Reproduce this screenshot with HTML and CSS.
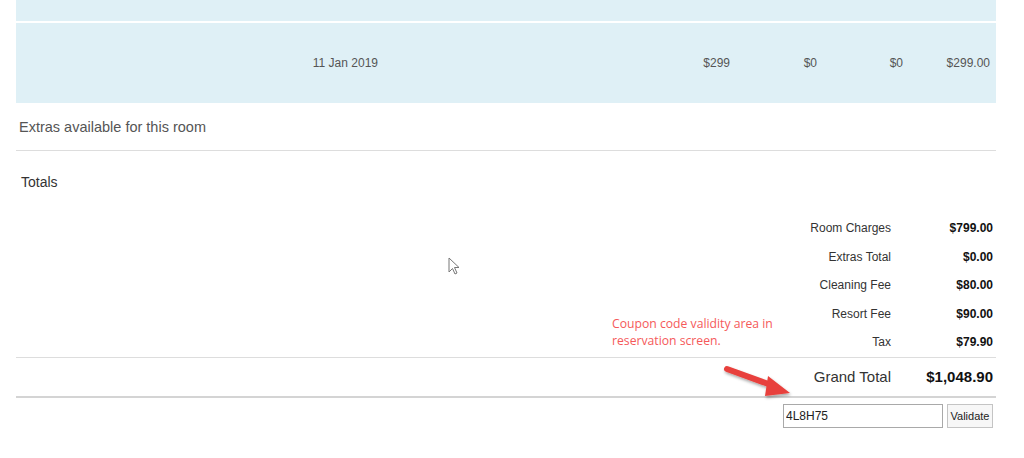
FILE: index.html
```html
<!DOCTYPE html>
<html>
<head>
<meta charset="utf-8">
<link rel="stylesheet" href="styles.css">
</head>
<body>
<div class="page">
  <div class="band band-top"></div>
  <div class="band band-row">
    <span class="cell date">11 Jan 2019</span>
    <span class="cell c1">$299</span>
    <span class="cell c2">$0</span>
    <span class="cell c3">$0</span>
    <span class="cell c4">$299.00</span>
  </div>
  <div class="extras">Extras available for this room</div>
  <div class="totals-title">Totals</div>
  <div class="totals">
    <div class="trow"><span class="tl">Room Charges</span><span class="tv">$799.00</span></div>
    <div class="trow"><span class="tl">Extras Total</span><span class="tv">$0.00</span></div>
    <div class="trow"><span class="tl">Cleaning Fee</span><span class="tv">$80.00</span></div>
    <div class="trow"><span class="tl">Resort Fee</span><span class="tv">$90.00</span></div>
    <div class="trow"><span class="tl">Tax</span><span class="tv">$79.90</span></div>
  </div>
  <div class="grand"><span class="gl">Grand Total</span><span class="gv">$1,048.90</span></div>
  <div class="coupon">
    <input class="code" type="text" value="4L8H75">
    <button class="validate">Validate</button>
  </div>
</div>
<div class="note">Coupon code validity area in<br>reservation screen.</div>
<svg class="arrow" width="90" height="50" viewBox="0 0 90 50">
  <defs>
    <filter id="sh" x="-20%" y="-20%" width="150%" height="150%">
      <feDropShadow dx="1" dy="2" stdDeviation="1.5" flood-color="#000" flood-opacity="0.35"/>
    </filter>
  </defs>
  <g filter="url(#sh)">
    <path d="M5 7 L52 24" stroke="#e8413c" stroke-width="6" stroke-linecap="round"/>
    <path d="M46 14 L68 31 L43 34 Z" fill="#e8413c"/>
  </g>
</svg>
<svg class="cursor" width="14" height="20" viewBox="0 0 14 20">
  <path d="M1 1 L1 15 L4.5 11.5 L7 17 L9 16 L6.5 10.5 L11 10.5 Z" fill="#fff" stroke="#777" stroke-width="1"/>
</svg>
</body>
</html>
```
FILE: styles.css
```css
* { box-sizing: border-box; }
body {
  margin: 0;
  background: #fff;
  font-family: "Liberation Sans", Arial, sans-serif;
  color: #333;
  position: relative;
  width: 1024px;
  height: 458px;
  overflow: hidden;
}
.page {
  margin-left: 16px;
  width: 980px;
}
.band {
  background: #dff0f6;
}
.band-top {
  height: 23px;
  border-bottom: 2px solid #fff;
}
.band-row {
  height: 80px;
  position: relative;
  display: flex;
  align-items: center;
  font-size: 12px;
  color: #555;
}
.cell { display: inline-block; text-align: right; }
.date { width: 362px; }
.c1 { width: 352px; }
.c2 { width: 87px; }
.c3 { width: 86px; }
.c4 { width: 87px; }
.extras {
  height: 48px;
  border-bottom: 1px solid #ddd;
  font-size: 14.5px;
  color: #555;
  padding-left: 3px;
  display: flex;
  align-items: center;
}
.totals-title {
  margin-top: 21px;
  line-height: 20px;
  font-size: 14px;
  padding-left: 5px;
  color: #333;
}
.totals {
  margin-top: 22px;
  border-bottom: 1px solid #ddd;
}
.trow {
  height: 28.5px;
  display: flex;
  align-items: center;
  justify-content: flex-end;
  font-size: 12px;
}
.tl {
  text-align: right;
  color: #333;
}
.tv {
  width: 105px;
  text-align: right;
  padding-right: 3px;
  font-weight: bold;
  color: #111;
}
.grand {
  height: 40px;
  display: flex;
  align-items: center;
  justify-content: flex-end;
  border-bottom: 2px solid #d4d4d4;
}
.gl {
  font-size: 15px;
  color: #333;
}
.gv {
  width: 105px;
  text-align: right;
  padding-right: 3px;
  font-size: 15px;
  font-weight: bold;
  color: #111;
}
.coupon {
  margin-top: 6px;
  display: flex;
  justify-content: flex-end;
  gap: 4px;
  padding-right: 3px;
}
.code {
  width: 160px;
  height: 24px;
  border: 1px solid #a9a9a9;
  padding: 0 2px;
  font-family: "Liberation Sans", Arial, sans-serif;
  font-size: 12px;
  color: #222;
}
.validate {
  width: 46px;
  height: 24px;
  border: 1px solid #c4c4c4;
  background: #f7f7f7;
  font-family: "Liberation Sans", Arial, sans-serif;
  font-size: 11px;
  color: #222;
  padding: 0;
}
.note {
  position: absolute;
  left: 612px;
  top: 315px;
  font-family: "Open Sans", "Noto Sans", sans-serif;
  font-size: 12.2px;
  line-height: 17px;
  color: #f5595a;
}
.arrow {
  position: absolute;
  left: 722px;
  top: 362px;
}
.cursor {
  position: absolute;
  left: 448px;
  top: 257px;
}
```
